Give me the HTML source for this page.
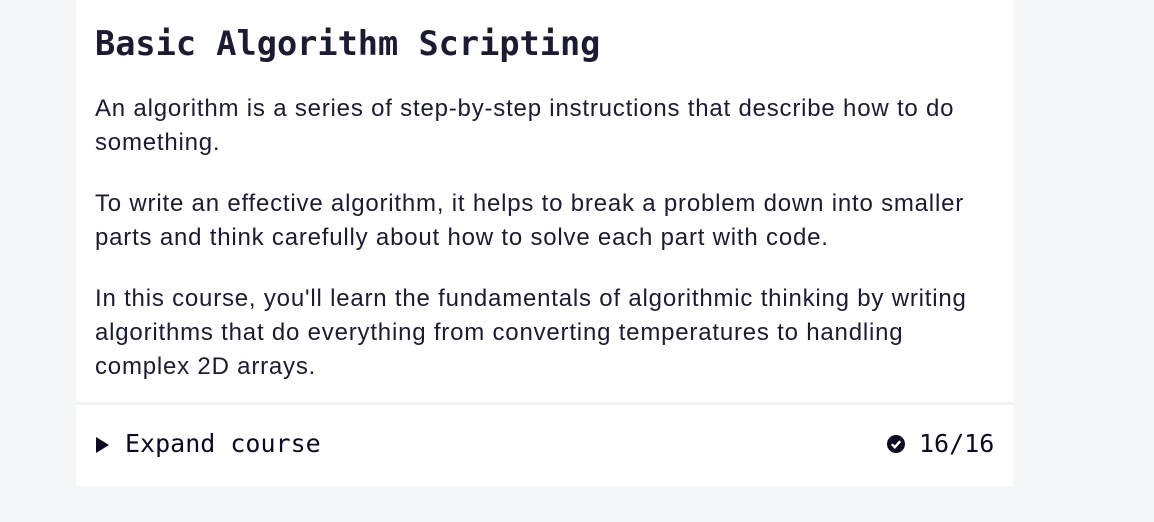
<!DOCTYPE html>
<html><head><style>
body{margin:0;background:#f5f6f7;width:1154px;height:522px;overflow:hidden;font-family:"Liberation Sans",sans-serif;color:#1b1b32}
.card{position:absolute;left:76px;top:0;width:937px;height:486px;background:#fff}
h2{position:absolute;left:19px;top:22px;margin:0;font-family:"DejaVu Sans Mono",monospace;font-size:33.6px;font-weight:bold;color:#1b1b32;line-height:44px}
.p{position:absolute;left:19px;width:910px;font-size:24px;line-height:34px;color:#1b1b32;letter-spacing:0.8px;white-space:nowrap}
.sep{position:absolute;left:0;top:402px;width:937px;height:3px;background:#f0f1f3}
.f{position:absolute;top:427px;font-family:"DejaVu Sans Mono",monospace;font-size:25px;line-height:34px;color:#0a0a23}
</style></head><body>
<div class="card">
<h2>Basic Algorithm Scripting</h2>
<div class="p" style="top:92px">An algorithm is a series of step-by-step instructions that describe how to do<br>something.</div>
<div class="p" style="top:187px">To write an effective algorithm, it helps to break a problem down into smaller<br>parts and think carefully about how to solve each part with code.</div>
<div class="p" style="top:282px">In this course, you'll learn the fundamentals of algorithmic thinking by writing<br>algorithms that do everything from converting temperatures to handling<br>complex 2D arrays.</div>
<div class="sep"></div>
<svg style="position:absolute;left:20px;top:437px" width="14" height="16"><path d="M0 0L13 8L0 16Z" fill="#0a0a23"/></svg>
<div class="f" style="left:49px">Expand course</div>
<svg style="position:absolute;left:811px;top:435px" width="18" height="18"><circle cx="9" cy="9" r="9" fill="#0a0a23"/><path d="M4.8 9.2L7.8 12.2L13.2 6.2" stroke="#fff" stroke-width="2.4" fill="none"/></svg>
<div class="f" style="left:843px">16/16</div>
</div>
</body></html>
